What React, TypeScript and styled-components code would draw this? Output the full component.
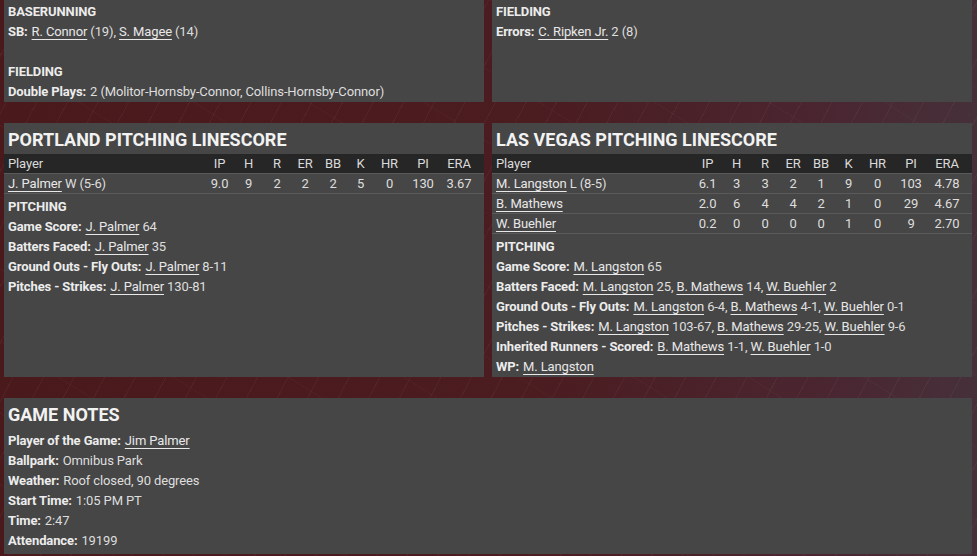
import React from 'react';
import styled, { createGlobalStyle } from 'styled-components';

const GlobalStyle = createGlobalStyle`
  html, body {
    margin: 0;
    padding: 0;
    background: #4b1b1e;
  }
  body {
    font-family: Roboto, "Noto Sans", sans-serif;
    font-size: 13px;
    letter-spacing: -0.12px;
    color: #dedede;
  }
`;

const Page = styled.div`
  width: 977px;
  height: 556px;
  overflow: hidden;
  box-sizing: border-box;
  padding: 0 5px 0 4px;
  background:
    repeating-linear-gradient(118deg, transparent 0 26px, rgba(255, 255, 255, 0.04) 26px 27px),
    repeating-linear-gradient(32deg, transparent 0 60px, rgba(255, 255, 255, 0.025) 60px 61px),
    linear-gradient(90deg, #4a191c 0%, #4b1c20 55%, #4a2631 85%, #463039 100%);
`;

const Grid = styled.div`
  display: grid;
  grid-template-columns: 480px 480px;
  column-gap: 8px;
  row-gap: 21px;
`;

const Panel = styled.section<{ $wide?: boolean; $height: number; $top?: number }>`
  grid-column: ${p => (p.$wide ? '1 / span 2' : 'auto')};
  height: ${p => p.$height}px;
  box-sizing: border-box;
  background: #464646;
  padding: ${p => p.$top ?? 1}px 0 1px;
`;

const Body = styled.div`
  padding: 0 4px;
`;

const Line = styled.div`
  height: 20px;
  line-height: 20px;
  white-space: nowrap;
`;

const Caps = styled(Line)`
  font-weight: 700;
  color: #ececec;
`;

const Label = styled.b`
  font-weight: 700;
  color: #ececec;
  margin-right: 4px;
`;

const Link = styled.a`
  color: #e8e8e8;
  text-decoration: underline;
  text-decoration-thickness: 1px;
  text-underline-offset: 3px;
`;

const Title = styled.h2<{ $gap?: number }>`
  margin: 0;
  padding: 3px 4px 0;
  height: 27px;
  line-height: 26px;
  margin-bottom: ${p => p.$gap ?? 0}px;
  font-size: 18px;
  font-weight: 700;
  letter-spacing: 0;
  color: #f2f2f2;
`;

const cols = '1fr 29px 29px 28px 28px 28px 27px 31px 36px 36px';

const Row = styled.div<{ $head?: boolean }>`
  display: grid;
  grid-template-columns: ${cols};
  height: 19px;
  line-height: 19px;
  padding: 0 7px 0 4px;
  border-bottom: 1px solid #5a5a5a;
  background: ${p => (p.$head ? '#262626' : 'transparent')};
  color: ${p => (p.$head ? '#dadada' : '#dedede')};
  white-space: nowrap;
`;

const Cell = styled.span`
  text-align: center;
`;

const Spacer = styled.div`
  height: 3px;
`;

type Pitcher = { name: string; dec?: string; stats: string[] };

const heads = ['IP', 'H', 'R', 'ER', 'BB', 'K', 'HR', 'PI', 'ERA'];

const Linescore: React.FC<{ team: string; rows: Pitcher[] }> = ({ team, rows }) => (
  <>
    <Title>{team} PITCHING LINESCORE</Title>
    <Row $head>
      <span>Player</span>
      {heads.map(h => (
        <Cell key={h}>{h}</Cell>
      ))}
    </Row>
    {rows.map(r => (
      <Row key={r.name}>
        <span>
          <Link>{r.name}</Link>
          {r.dec ? ` ${r.dec}` : ''}
        </span>
        {r.stats.map((s, i) => (
          <Cell key={i}>{s}</Cell>
        ))}
      </Row>
    ))}
    <Spacer />
  </>
);

type Part = { who: string; val?: string };

const Entry: React.FC<{ label: string; parts: Part[] }> = ({ label, parts }) => (
  <Line>
    <Label>{label}:</Label>
    {parts.map((p, i) => (
      <React.Fragment key={i}>
        <Link>{p.who}</Link>
        {p.val ? ` ${p.val}` : ''}
        {i < parts.length - 1 ? ', ' : ''}
      </React.Fragment>
    ))}
  </Line>
);

const Plain: React.FC<{ label: string; children: React.ReactNode }> = ({ label, children }) => (
  <Line>
    <Label>{label}:</Label>
    {children}
  </Line>
);

const L = 'M. Langston';
const M = 'B. Mathews';
const W = 'W. Buehler';
const P = 'J. Palmer';

export default function App() {
  return (
    <Page>
      <GlobalStyle />
      <Grid>
        <Panel $height={102} $top={2}>
          <Body>
            <Caps>BASERUNNING</Caps>
            <Entry label="SB" parts={[{ who: 'R. Connor', val: '(19)' }, { who: 'S. Magee', val: '(14)' }]} />
            <Line />
            <Caps>FIELDING</Caps>
            <Plain label="Double Plays">2 (Molitor-Hornsby-Connor, Collins-Hornsby-Connor)</Plain>
          </Body>
        </Panel>
        <Panel $height={102} $top={2}>
          <Body>
            <Caps>FIELDING</Caps>
            <Entry label="Errors" parts={[{ who: 'C. Ripken Jr.', val: '2 (8)' }]} />
          </Body>
        </Panel>

        <Panel $height={254}>
          <Linescore
            team="PORTLAND"
            rows={[{ name: P, dec: 'W (5-6)', stats: ['9.0', '9', '2', '2', '2', '5', '0', '130', '3.67'] }]}
          />
          <Body>
            <Caps>PITCHING</Caps>
            <Entry label="Game Score" parts={[{ who: P, val: '64' }]} />
            <Entry label="Batters Faced" parts={[{ who: P, val: '35' }]} />
            <Entry label="Ground Outs - Fly Outs" parts={[{ who: P, val: '8-11' }]} />
            <Entry label="Pitches - Strikes" parts={[{ who: P, val: '130-81' }]} />
          </Body>
        </Panel>
        <Panel $height={254}>
          <Linescore
            team="LAS VEGAS"
            rows={[
              { name: L, dec: 'L (8-5)', stats: ['6.1', '3', '3', '2', '1', '9', '0', '103', '4.78'] },
              { name: M, stats: ['2.0', '6', '4', '4', '2', '1', '0', '29', '4.67'] },
              { name: W, stats: ['0.2', '0', '0', '0', '0', '1', '0', '9', '2.70'] },
            ]}
          />
          <Body>
            <Caps>PITCHING</Caps>
            <Entry label="Game Score" parts={[{ who: L, val: '65' }]} />
            <Entry label="Batters Faced" parts={[{ who: L, val: '25' }, { who: M, val: '14' }, { who: W, val: '2' }]} />
            <Entry
              label="Ground Outs - Fly Outs"
              parts={[{ who: L, val: '6-4' }, { who: M, val: '4-1' }, { who: W, val: '0-1' }]}
            />
            <Entry
              label="Pitches - Strikes"
              parts={[{ who: L, val: '103-67' }, { who: M, val: '29-25' }, { who: W, val: '9-6' }]}
            />
            <Entry label="Inherited Runners - Scored" parts={[{ who: M, val: '1-1' }, { who: W, val: '1-0' }]} />
            <Entry label="WP" parts={[{ who: L }]} />
          </Body>
        </Panel>

        <Panel $wide $height={156}>
          <Title $gap={2}>GAME NOTES</Title>
          <Body>
            <Entry label="Player of the Game" parts={[{ who: 'Jim Palmer' }]} />
            <Plain label="Ballpark">Omnibus Park</Plain>
            <Plain label="Weather">Roof closed, 90 degrees</Plain>
            <Plain label="Start Time">1:05 PM PT</Plain>
            <Plain label="Time">2:47</Plain>
            <Plain label="Attendance">19199</Plain>
          </Body>
        </Panel>
      </Grid>
    </Page>
  );
}
